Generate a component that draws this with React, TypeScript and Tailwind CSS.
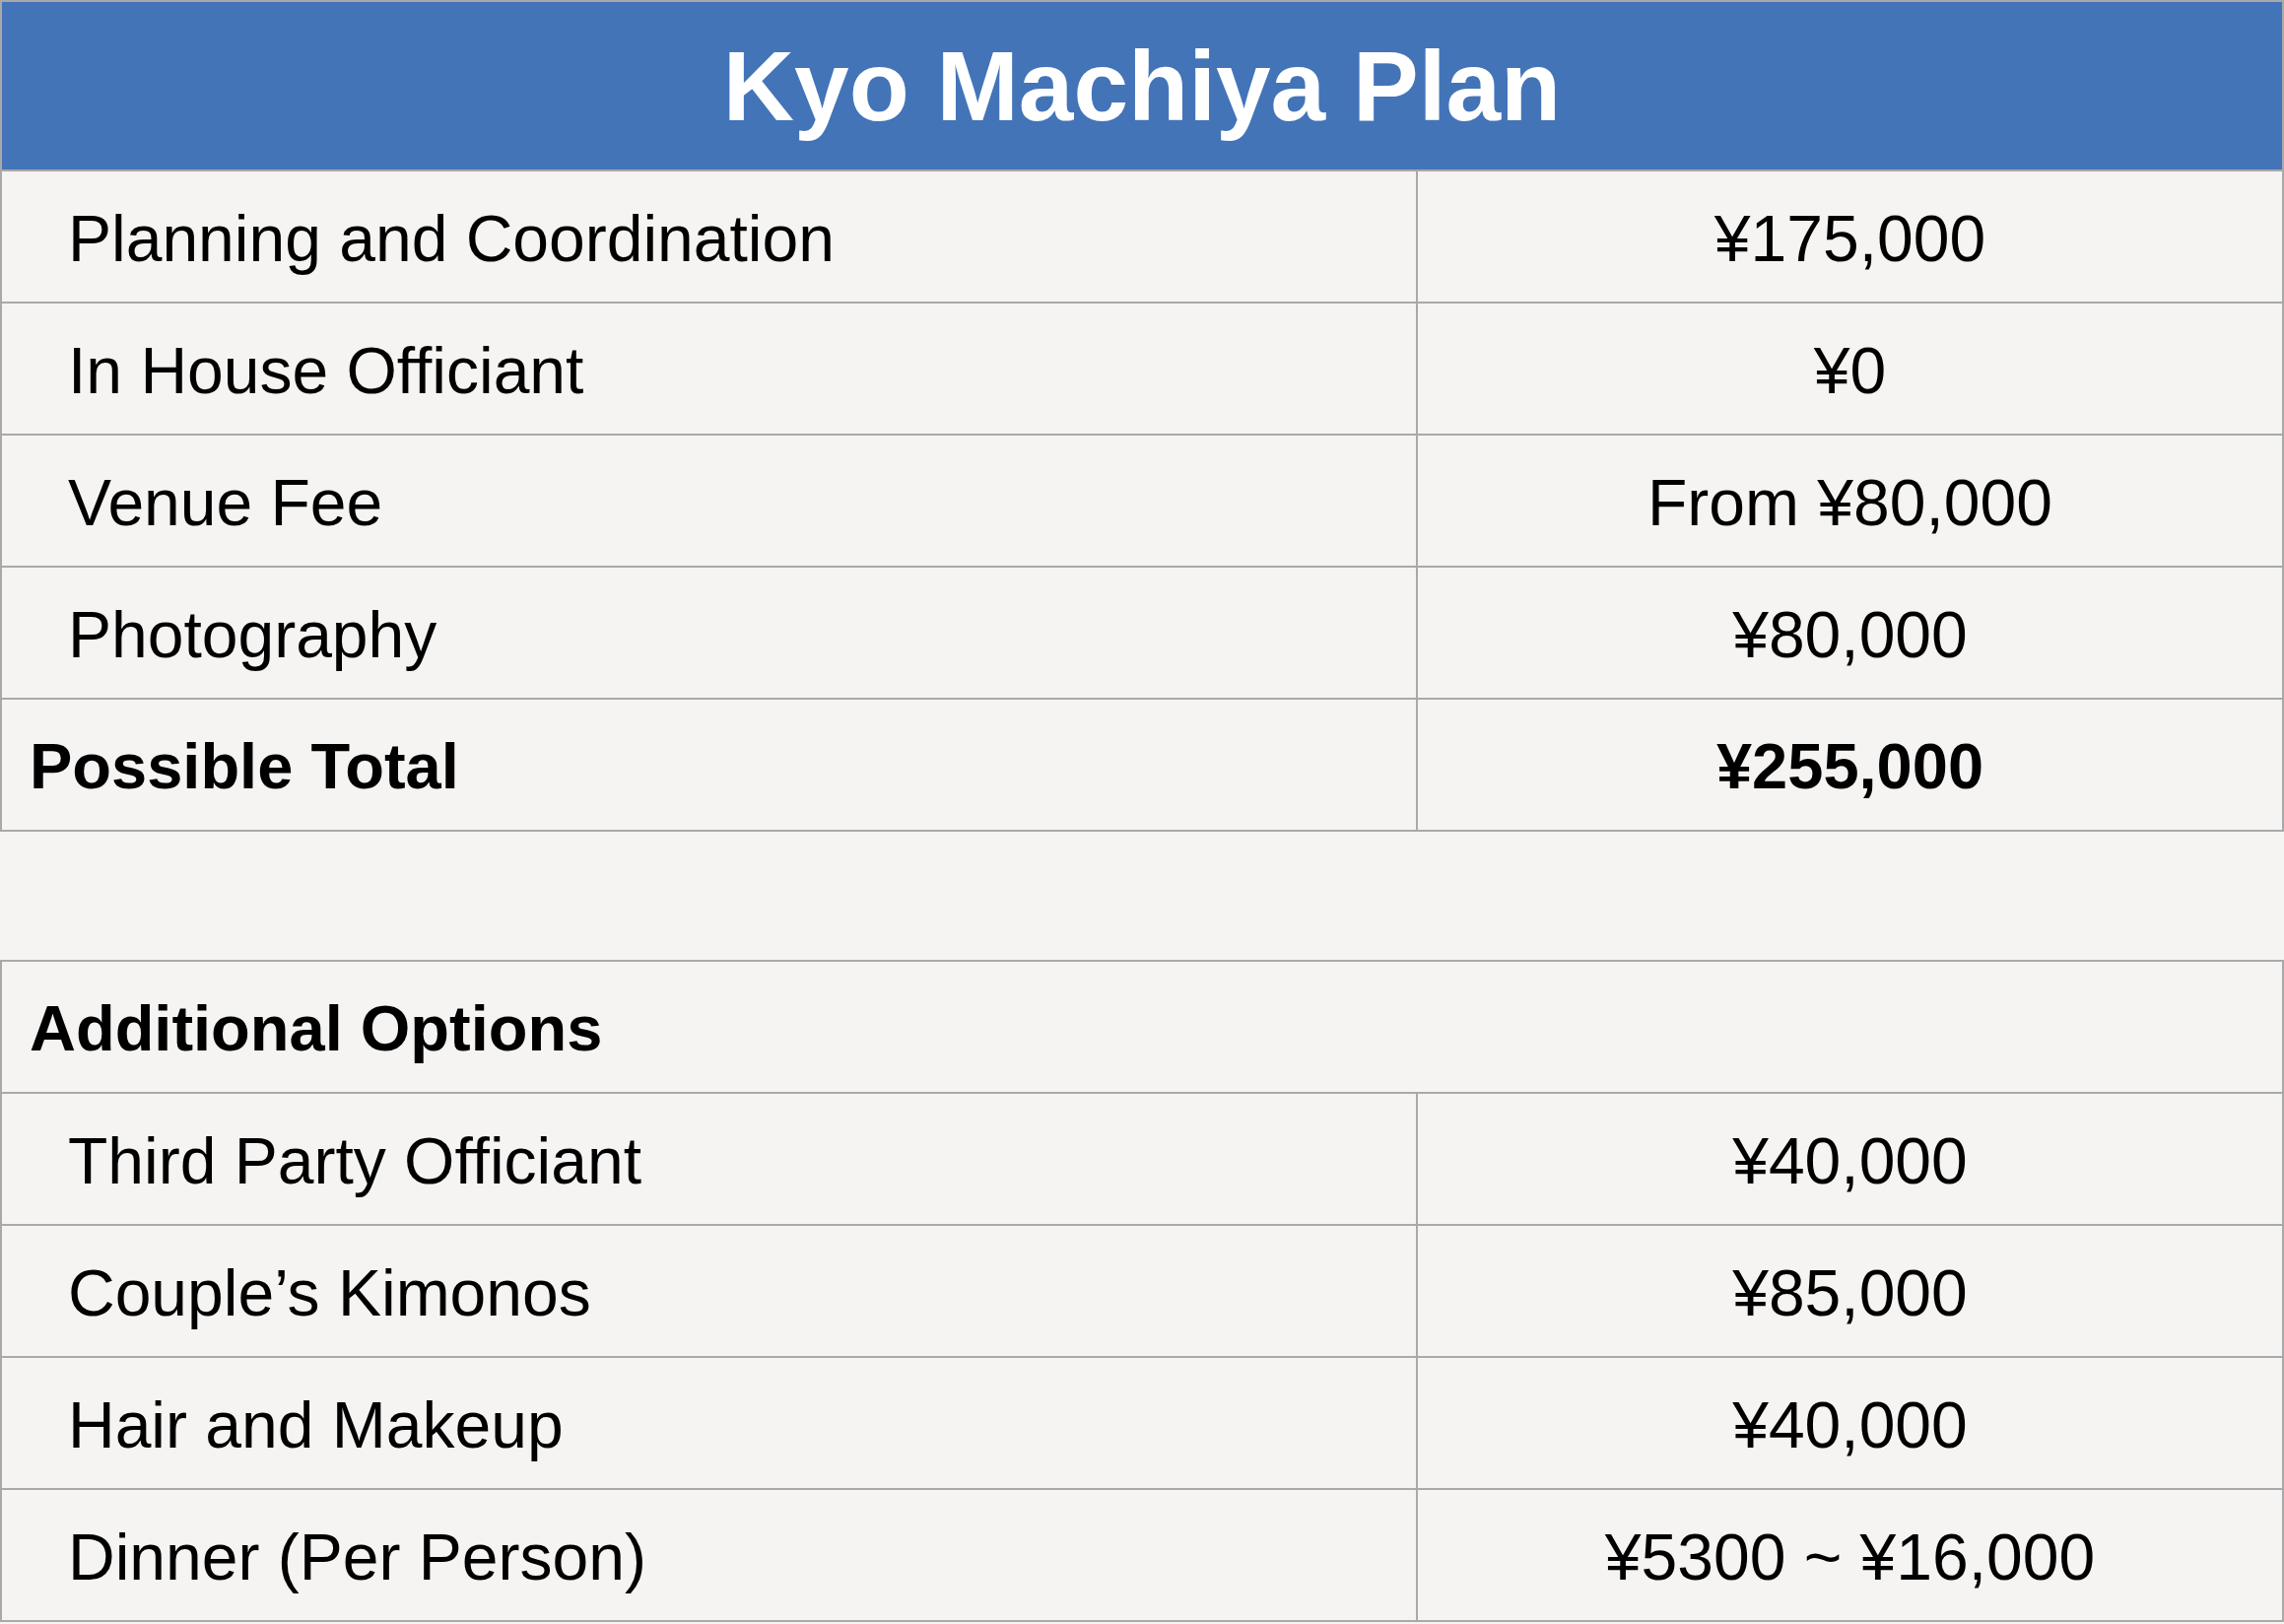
const planRows = [
  { label: 'Planning and Coordination', value: '¥175,000' },
  { label: 'In House Officiant', value: '¥0' },
  { label: 'Venue Fee', value: 'From ¥80,000' },
  { label: 'Photography', value: '¥80,000' },
];

const optionRows = [
  { label: 'Third Party Officiant', value: '¥40,000' },
  { label: 'Couple’s Kimonos', value: '¥85,000' },
  { label: 'Hair and Makeup', value: '¥40,000' },
  { label: 'Dinner (Per Person)', value: '¥5300 ~ ¥16,000' },
];

function Row({ label, value, bold }: { label: string; value: string; bold?: boolean }) {
  return (
    <div className="flex h-[134px] border-b-2 border-[#a9a9a9] pt-[4px]">
      <div
        className={`flex w-[1435px] items-center ${
          bold ? 'pl-[28px] text-[65px] font-bold' : 'pl-[67px] text-[66px]'
        }`}
      >
        {label}
      </div>
      <div className="-mt-[4px] w-[2px] bg-[#a9a9a9]" />
      <div className={`flex flex-1 items-center justify-center ${bold ? 'text-[65px] font-bold' : 'text-[66px]'}`}>
        {value}
      </div>
    </div>
  );
}

export default function App() {
  return (
    <div
      className="h-[1648px] w-[2318px] overflow-hidden bg-[#f5f4f2] text-black"
      style={{ fontFamily: '"Liberation Sans", Arial, sans-serif' }}
    >
      {/* Plan table */}
      <div className="border-x-2 border-[#a9a9a9]">
        <div className="flex h-[174px] items-center justify-center border-y-2 border-[#a9a9a9] bg-[#4374b8]">
          <h1 className="text-[100px] font-bold leading-none text-white">Kyo Machiya Plan</h1>
        </div>
        {planRows.map((r) => (
          <Row key={r.label} label={r.label} value={r.value} />
        ))}
        <Row label="Possible Total" value="¥255,000" bold />
      </div>

      <div className="h-[130px]" />

      {/* Options table */}
      <div className="border-x-2 border-t-2 border-[#a9a9a9]">
        <div className="flex h-[134px] items-center border-b-2 border-[#a9a9a9] pl-[28px] pt-[4px] text-[65px] font-bold">
          Additional Options
        </div>
        {optionRows.map((r) => (
          <Row key={r.label} label={r.label} value={r.value} />
        ))}
      </div>
    </div>
  );
}
